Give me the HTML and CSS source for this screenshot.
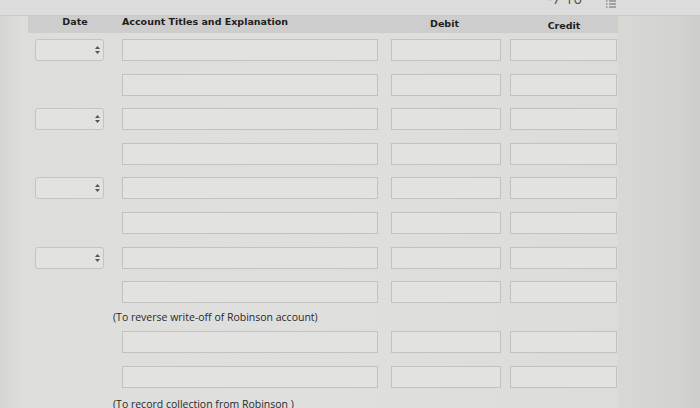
FILE: index.html
```html
<!DOCTYPE html>
<html>
<head>
<meta charset="utf-8">
<link rel="stylesheet" href="styles.css">
</head>
<body>
<div class="screen">
  <div class="topbar">
    <span class="pager">-7 10</span>
    <svg class="listicon" width="10" height="9" viewBox="0 0 10 9"><path d="M0 1h1.5M3 1h7M0 4h1.5M3 4h7M0 7h1.5M3 7h7" stroke="#666" stroke-width="1.2"/></svg>
  </div>
  <div class="main">
    <div class="sheet">
      <div class="head">
        <div class="h-date">Date</div>
        <div class="h-acct">Account Titles and Explanation</div>
        <div class="h-debit">Debit</div>
        <div class="h-credit">Credit</div>
      </div>
      <div class="rows">
        <div class="row"><div class="cell-date"><div class="sel"><svg width="5" height="8" viewBox="0 0 5 8"><path d="M2.5 0L5 3H0zM0 5h5L2.5 8z" fill="#555"/></svg></div></div><div class="cell-acct"><div class="box acct"></div></div><div class="cell-debit"><div class="box debit"></div></div><div class="box credit"></div></div>
        <div class="row"><div class="cell-date"></div><div class="cell-acct"><div class="box acct"></div></div><div class="cell-debit"><div class="box debit"></div></div><div class="box credit"></div></div>
        <div class="row"><div class="cell-date"><div class="sel"><svg width="5" height="8" viewBox="0 0 5 8"><path d="M2.5 0L5 3H0zM0 5h5L2.5 8z" fill="#555"/></svg></div></div><div class="cell-acct"><div class="box acct"></div></div><div class="cell-debit"><div class="box debit"></div></div><div class="box credit"></div></div>
        <div class="row"><div class="cell-date"></div><div class="cell-acct"><div class="box acct"></div></div><div class="cell-debit"><div class="box debit"></div></div><div class="box credit"></div></div>
        <div class="row"><div class="cell-date"><div class="sel"><svg width="5" height="8" viewBox="0 0 5 8"><path d="M2.5 0L5 3H0zM0 5h5L2.5 8z" fill="#555"/></svg></div></div><div class="cell-acct"><div class="box acct"></div></div><div class="cell-debit"><div class="box debit"></div></div><div class="box credit"></div></div>
        <div class="row"><div class="cell-date"></div><div class="cell-acct"><div class="box acct"></div></div><div class="cell-debit"><div class="box debit"></div></div><div class="box credit"></div></div>
        <div class="row"><div class="cell-date"><div class="sel"><svg width="5" height="8" viewBox="0 0 5 8"><path d="M2.5 0L5 3H0zM0 5h5L2.5 8z" fill="#555"/></svg></div></div><div class="cell-acct"><div class="box acct"></div></div><div class="cell-debit"><div class="box debit"></div></div><div class="box credit"></div></div>
        <div class="row"><div class="cell-date"></div><div class="cell-acct"><div class="box acct"></div></div><div class="cell-debit"><div class="box debit"></div></div><div class="box credit"></div></div>
        <div class="note">(To reverse write-off of Robinson account)</div>
        <div class="row"><div class="cell-date"></div><div class="cell-acct"><div class="box acct"></div></div><div class="cell-debit"><div class="box debit"></div></div><div class="box credit"></div></div>
        <div class="row"><div class="cell-date"></div><div class="cell-acct"><div class="box acct"></div></div><div class="cell-debit"><div class="box debit"></div></div><div class="box credit"></div></div>
        <div class="note note2">(To record collection from Robinson )</div>
      </div>
    </div>
    <div class="side"></div>
  </div>
</div>
</body>
</html>
```

FILE: styles.css
```css
html, body {
  margin: 0;
  padding: 0;
}
body {
  width: 700px;
  height: 408px;
  overflow: hidden;
  background: #dcdcda;
  font-family: "DejaVu Sans", Verdana, sans-serif;
  color: #1e1e1e;
}
.screen {
  width: 700px;
  height: 408px;
  overflow: hidden;
  background: linear-gradient(to right, #d4d4d2 0px, #dddddb 20px, #dfdfdd 300px, #dcdcd9 600px);
}
.topbar {
  height: 15px;
  background: #dcdcdc;
  border-bottom: 1px solid #cacaca;
  display: flex;
  justify-content: flex-end;
  align-items: flex-start;
  gap: 24px;
  padding-right: 84px;
  overflow: hidden;
}
.pager {
  font-family: "Open Sans", sans-serif;
  font-size: 15px;
  line-height: 15px;
  margin-top: -9px;
  color: #555;
}
.main {
  display: flex;
}
.sheet {
  margin-left: 28px;
  width: 590px;
}
.side {
  flex: 1;
  height: 392px;
  background: linear-gradient(to right, #d8d9d5, #d2d3ce 60px, #cdcec9);
}
.head {
  height: 17px;
  background: #cdcdcd;
  display: grid;
  grid-template-columns: 94px 269px 119px 108px;
  font-weight: bold;
  font-size: 9.5px;
  line-height: 11px;
  align-items: start;
}
.h-date {
  text-align: center;
  padding-top: 0px;
}
.h-acct {
  padding-top: 0px;
}
.h-debit {
  text-align: center;
  padding-right: 12px;
  padding-top: 2px;
}
.h-credit {
  text-align: center;
  padding-top: 4px;
}
.rows {
  padding-top: 6px;
  padding-left: 7px;
}
.row {
  display: grid;
  grid-template-columns: 87px 269px 119px 108px;
  height: 22px;
  margin-bottom: 12.6px;
}
.box {
  height: 22px;
  box-sizing: border-box;
  background: #e2e2e0;
  border: 1px solid #c2c2c0;
}
.acct { width: 256px; }
.debit { width: 110px; }
.credit { width: 107px; }
.sel {
  width: 69px;
  height: 22px;
  box-sizing: border-box;
  background: #e2e2e0;
  border: 1px solid #c4c4c2;
  border-radius: 3px;
  display: flex;
  align-items: center;
  justify-content: flex-end;
  padding-right: 3px;
}
.note {
  font-family: "Open Sans", "Liberation Sans", sans-serif;
  font-size: 10.5px;
  line-height: 14px;
  padding-left: 78px;
  margin-top: -6px;
  margin-bottom: 7.4px;
  color: #2a2a2a;
}
.note2 {
  margin-top: -3px;
}
```
